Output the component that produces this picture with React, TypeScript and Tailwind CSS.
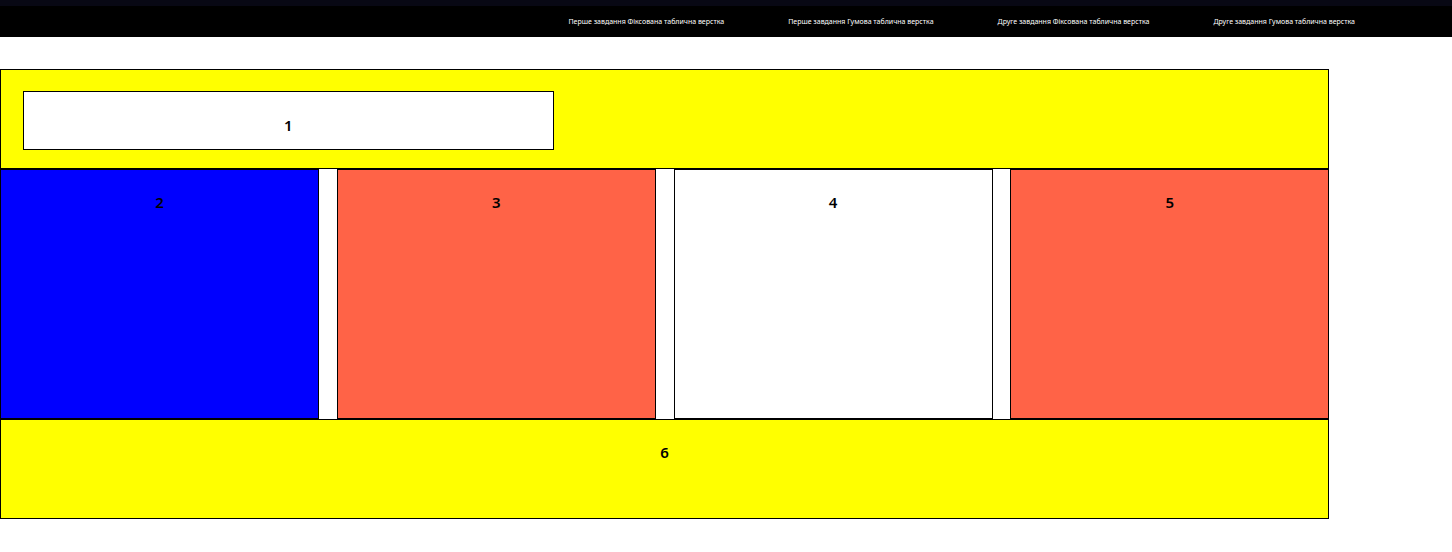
const links = [
  "Перше завдання Фіксована таблична верстка",
  "Перше завдання Гумова таблична верстка",
  "Друге завдання Фіксована таблична верстка",
  "Друге завдання Гумова таблична верстка",
];

const columns = [
  { label: "2", color: "bg-[#0000ff]" },
  { label: "3", color: "bg-[#ff6347]" },
  { label: "4", color: "bg-white" },
  { label: "5", color: "bg-[#ff6347]" },
];

export default function App() {
  return (
    <div className="bg-white font-['Noto_Sans','Open_Sans',sans-serif] text-black">
      <header className="border-t-6 border-[#080814] bg-black">
        <nav className="flex h-[31px] items-center justify-end gap-16 pr-[97px] text-[7px] leading-4 text-white">
          {links.map((link) => (
            <a key={link} href="#" className="whitespace-nowrap">
              {link}
            </a>
          ))}
        </nav>
      </header>
      <main className="mt-8 w-[91.55%] text-center text-[15px] leading-5 font-semibold">
        <section className="h-[100px] border border-black bg-[#ffff00] px-[22px] pt-[21px]">
          <div className="h-[59px] w-[41.35%] border border-black bg-white pt-[23px]">1</div>
        </section>
        <section className="flex justify-between">
          {columns.map((column) => (
            <div key={column.label} className={`h-[250px] w-[24%] border border-black pt-[22px] ${column.color}`}>
              {column.label}
            </div>
          ))}
        </section>
        <footer className="h-[100px] border border-black bg-[#ffff00] pt-[22px]">6</footer>
      </main>
    </div>
  );
}
